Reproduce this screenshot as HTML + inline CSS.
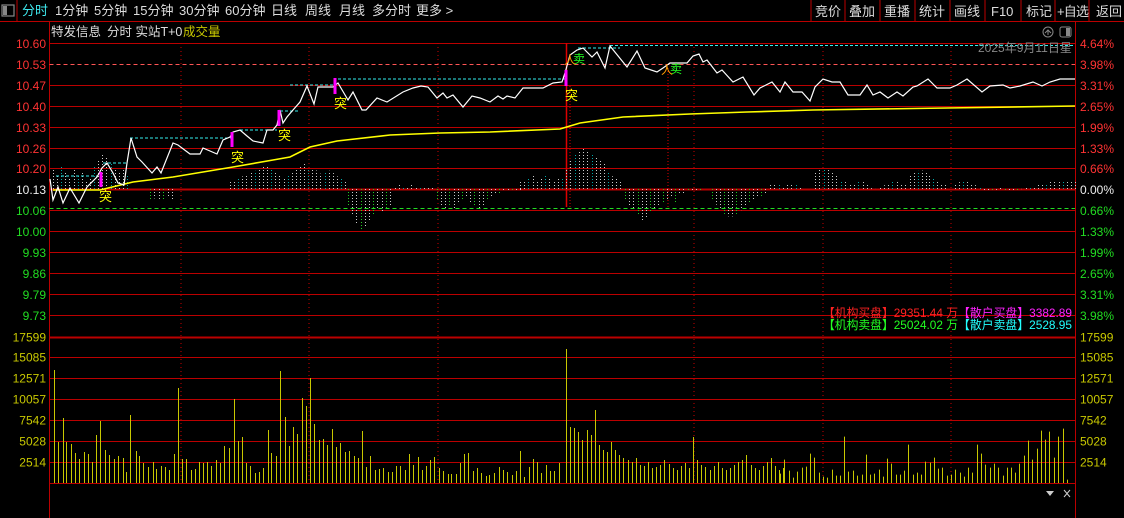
<!DOCTYPE html>
<html><head><meta charset="utf-8"><style>
html,body{margin:0;padding:0;background:#000;width:1124px;height:518px;overflow:hidden}
svg{display:block}
text{font-family:"Liberation Sans","Noto Sans CJK SC",sans-serif}
</style></head><body>
<svg id="s" width="1124" height="518" viewBox="0 0 1124 518" xmlns="http://www.w3.org/2000/svg">
<rect width="1124" height="518" fill="#000"/>
<rect x="2" y="5" width="12" height="11" fill="none" stroke="#888" stroke-width="1.2"/><rect x="3" y="6" width="4" height="9" fill="#888"/>
<line x1="17" y1="0" x2="17" y2="21" stroke="#b00" stroke-width="1"/>
<g font-size="13" fill="#ddd">
<text x="22" y="15" fill="#3ee8ee">分时</text>
<text x="55" y="15">1分钟</text><text x="94" y="15">5分钟</text><text x="133" y="15">15分钟</text>
<text x="179" y="15">30分钟</text><text x="225" y="15">60分钟</text><text x="271" y="15">日线</text>
<text x="305" y="15">周线</text><text x="339" y="15">月线</text><text x="372" y="15">多分时</text><text x="416" y="15">更多 &gt;</text>
<text x="815" y="16">竞价</text><text x="849" y="16">叠加</text><text x="884" y="16">重播</text><text x="919" y="16">统计</text>
<text x="954" y="16">画线</text><text x="991" y="16">F10</text><text x="1026" y="16">标记</text><text x="1057" y="16" letter-spacing="-0.8">+自选</text><text x="1096" y="16">返回</text>
</g>
<g stroke="#b00"><line x1="811" y1="0" x2="811" y2="21"/><line x1="845" y1="0" x2="845" y2="21"/><line x1="880" y1="0" x2="880" y2="21"/><line x1="915" y1="0" x2="915" y2="21"/><line x1="950" y1="0" x2="950" y2="21"/><line x1="985" y1="0" x2="985" y2="21"/><line x1="1021" y1="0" x2="1021" y2="21"/><line x1="1055" y1="0" x2="1055" y2="21"/><line x1="1089" y1="0" x2="1089" y2="21"/></g>
<line x1="0" y1="21.5" x2="1124" y2="21.5" stroke="#b00"/>
<g font-size="12.5"><text x="51" y="36" fill="#ddd">特发信息</text><text x="107" y="36" fill="#ddd">分时 实站T+0</text><text x="183" y="36" fill="#c8c800">成交量</text></g>
<circle cx="1048" cy="32" r="5" fill="none" stroke="#888"/><path d="M1045 33 L1048 30 L1051 33 M1048 30 V35" stroke="#888" fill="none"/>
<rect x="1060" y="27" width="11" height="10" rx="2" fill="none" stroke="#888"/><rect x="1066" y="28" width="4" height="8" fill="#888"/>
<line x1="49.5" y1="22" x2="49.5" y2="518" stroke="#b00"/>
<line x1="1075.5" y1="22" x2="1075.5" y2="518" stroke="#b00"/>
<g id="grid" stroke="#b00" stroke-width="1"></g>
<g id="vlines"></g>
<g id="bars"></g>
<g id="vol"></g>
<g id="lines"></g>
<g id="labels" font-size="12"></g>
<text x="978" y="52" font-size="12" fill="#888">2025年9月11日星</text>
<g font-size="12">
<text x="823" y="317" fill="#f22" textLength="135" lengthAdjust="spacingAndGlyphs">【机构买盘】29351.44 万</text><text x="958" y="317" fill="#f2f" textLength="114" lengthAdjust="spacingAndGlyphs">【散户买盘】3382.89</text>
<text x="823" y="329" fill="#2f2" textLength="135" lengthAdjust="spacingAndGlyphs">【机构卖盘】25024.02 万</text><text x="958" y="329" fill="#2ff" textLength="114" lengthAdjust="spacingAndGlyphs">【散户卖盘】2528.95</text>
</g>
<path d="M1046 491 L1054 491 L1050 496 Z" fill="#ccc"/>
<path d="M1064 490 L1070 497 M1070 490 L1064 497" stroke="#ccc"/>
</svg>
<script>
var NS="http://www.w3.org/2000/svg";
function el(p,t,a,txt){var e=document.createElementNS(NS,t);for(var k in a)e.setAttribute(k,a[k]);if(txt!=null)e.textContent=txt;document.getElementById(p).appendChild(e);return e;}
var L=49.5,R=1075;
var pl=["10.60","10.53","10.47","10.40","10.33","10.26","10.20","10.13","10.06","10.00","9.93","9.86","9.79","9.73"];
var pr=["4.64%","3.98%","3.31%","2.65%","1.99%","1.33%","0.66%","0.00%","0.66%","1.33%","1.99%","2.65%","3.31%","3.98%"];
for(var i=0;i<14;i++){var y=Math.round(43+20.9*i)+.5;
 if(i==1){el('grid','line',{x1:L,y1:y,x2:R,y2:y,stroke:'#f55','stroke-dasharray':'4 3'});}
 else if(i==8){el('grid','line',{x1:L,y1:y,x2:R,y2:y,stroke:'#b00'});el('grid','line',{x1:L,y1:y-2,x2:R,y2:y-2,stroke:'#2d2','stroke-dasharray':'4 3'});}
 else el('grid','line',{x1:L,y1:y,x2:R,y2:y,'stroke-width':i==7?2:1});
 var c=i<7?'#f33':(i==7?'#eee':'#2d2');
 el('labels','text',{x:46,y:y+4.5,'text-anchor':'end',fill:c,'font-size':12},pl[i]);
 el('labels','text',{x:1080,y:y+4.5,fill:c,'font-size':12},pr[i]);}
var vl=["17599","15085","12571","10057","7542","5028","2514"];
var vy=[337,357,378,399,420,441,462,483];
for(var i=0;i<8;i++){el('grid','line',{x1:L,y1:vy[i]+.5,x2:R,y2:vy[i]+.5,'stroke-width':i==0?2:1});
 if(i<7){el('labels','text',{x:46,y:vy[i]+4.5,'text-anchor':'end',fill:'#c8c800'},vl[i]);el('labels','text',{x:1080,y:vy[i]+4.5,fill:'#c8c800'},vl[i]);}}
[181,309,438,694,823,951].forEach(function(x){el('vlines','line',{x1:x,y1:43,x2:x,y2:483,stroke:'#c00','stroke-dasharray':'1 3'});});
el('vlines','line',{x1:566.5,y1:43,x2:566.5,y2:207,stroke:'#d00','stroke-width':1.5});
el('vlines','line',{x1:570,y1:86,x2:570,y2:207,stroke:'#d00','stroke-dasharray':'1 2'});
el('vlines','line',{x1:668,y1:68,x2:668,y2:207,stroke:'#d00','stroke-dasharray':'1 2'});
var segs=[[53,127,[170,175,165,172,178,168,176,172,180,178,165,160,155,158,163,170,172,168,175]],[150,172,[200,198,203,196,199]],
[230,300,[182,180,178,176,174,172,170,168,166,168,172,175,178,176,172,170,168]],[300,345,[165,162,170,168,172,175,170,172,176,178,180]],
[348,390,[205,215,225,230,228,222,215,210,212,208,205]],[395,432,[186,185,186,186,185,186,186,187,186,187]],[437,520,[200,205,210,205,208,203,200,198,202,205,208,206,200,198,195,193,192,190,191,192,190]],
[520,562,[180,182,178,176,180,178,176,178,180,178,179]],[566,600,[170,160,155,150,148,150,153,158,162]],[600,620,[160,165,175,178,180]],
[625,700,[200,205,210,215,220,218,212,208,205,203,200,198,202,195,193,192,190,192,191]],[712,765,[200,205,210,215,217,216,212,208,205,200,198,196,194]],
[770,800,[185,184,185,186,185,184,185,186]],[815,845,[172,170,168,170,172,175,180,182]],[850,905,[185,183,180,182,185,190,188,186,184,182,180,183,185]],[910,945,[175,172,170,172,175,180,183,185]],
[955,1000,[184,182,180,182,184,186,190,192,191,190,188]],[1005,1075,[191,190,191,190,189,188,187,186,185,184,183,182,181,180,182,181,180,181]]];
segs.forEach(function(sg){var a=sg[2],n=a.length,w=sg[1]-sg[0],cnt=Math.max(2,Math.round(w/4.1)+1);
 for(var k=0;k<cnt;k++){var t=k/(cnt-1)*(n-1),i0=Math.floor(t),i1=Math.min(n-1,i0+1),y=a[i0]+(a[i1]-a[i0])*(t-i0);
 var x=Math.round(sg[0]+w*k/(cnt-1))+.5;
 var c=y<189?((k%4==2)?'#0aa':'#ccc'):((k%3==0)?'#2c2':'#ccc');
 el('bars','line',{x1:x,y1:189,x2:x,y2:y,stroke:c,'stroke-dasharray':'1 2'});}});
var vz=[[150,120],[163,336],[175,264],[186,336],[198,342],[211,369],[222,387],[234,366],[245,372],[258,396],[270,315],[281,273],[295,360],[306,375],[318,387],[330,378],[343,384],[354,426],[365,255],[380,363],[390,378],[401,399],[413,411],[427,396],[438,417],[450,408],[461,411],[474,420],[486,372],[497,174],[510,387],[522,387],[534,420],[545,417],[558,396],[569,399],[580,396],[592,408],[606,390],[617,399],[628,348],[642,354],[654,207],[665,333],[677,321],[690,399],[701,408],[713,429],[724,426],[737,414],[749,300],[760,369],[774,378],[785,123],[797,261],[808,348],[821,291],[832,312],[845,204],[858,228],[869,144],[880,282],[892,330],[905,327],[916,345],[929,297],[940,351],[953,339],[965,366],[977,363],[990,378],[1001,384],[1013,303],[1024,411],[1037,378],[1049,420],[1061,417],[1072,414],[1085,426],[1097,426],[1108,408],[1121,408],[1133,420],[1144,372],[1156,405],[1169,381],[1181,420],[1192,408],[1204,390],[1216,381],[1228,414],[1240,423],[1253,432],[1264,432],[1276,432],[1288,399],[1300,372],[1311,369],[1323,423],[1336,414],[1348,429],[1360,438],[1370,435],[1384,429],[1396,411],[1407,420],[1419,426],[1433,435],[1445,423],[1455,363],[1468,441],[1480,411],[1491,387],[1503,396],[1516,429],[1528,405],[1540,423],[1552,423],[1564,399]];
function vb(x,y){el('vol','line',{x1:Math.round(x)+.5,y1:483,x2:Math.round(x)+.5,y2:y,stroke:'#c8c800'});}
vz.forEach(function(p){vb(p[0]/2.8,330+p[1]/3);});
var mid=[349,427,428,432,440,430,435,410,445,450,452,442,450,455,458,460,462,458,465,466,462,468,467,465,460,464,468,470,466,463,468,437,460,465,467,470,466,462,468,470,468,465,462,460,455,465,468,470,466,462,458,466,470,468];
for(var k=0;k<mid.length;k++)vb(566+k*4.1,mid[k]);
var rz=[[0,522],[13,480],[28,513],[40,534],[52,516],[65,504],[78,501],[91,462],[103,474],[117,519],[130,531],[142,534],[155,510],[168,528],[180,528],[193,411],[205,516],[220,513],[232,528],[245,525],[259,465],[271,525],[283,522],[296,510],[310,531],[322,477],[334,492],[347,525],[360,525],[373,513],[385,435],[399,525],[411,519],[423,525],[436,486],[450,489],[463,474],[475,507],[487,504],[502,528],[514,525],[526,510],[540,519],[553,531],[565,504],[577,519],[592,435],[604,462],[616,495],[630,504],[643,492],[655,504],[668,528],[681,504],[693,504],[705,519],[718,492],[732,468],[745,423],[757,480],[772,447],[784,393],[796,420],[808,396],[822,474],[835,411],[848,387],[860,540]];
rz.forEach(function(p){vb(780+p[0]/3,483-(550-p[1])/3);});
[[56,97,176],[103,127,163],[130,232,138],[240,277,130],[280,300,111],[290,333,85],[338,565,79],[578,620,48],[610,1075,45.5]].forEach(function(c){el('lines','line',{x1:c[0],y1:c[2],x2:c[1],y2:c[2],stroke:'#3ee','stroke-dasharray':'3 2'});});
el('lines','polyline',{points:"53,190 100,190 133,182 173,177 233,167 273,160 290,157 310,147 337,141 390,135 440,133 490,132 560,129 580,123 623,117 690,114 747,112 813,110 947,108 1075,106",fill:'none',stroke:'#ff0','stroke-width':1.6});
el('lines','polyline',{points:"50,179 53,200 58,187 63,203 70,188 79,203 87,187 97,177 102,168 107,163 113,173 118,183 124,185 127,163 131,138 137,157 142,162 152,173 157,167 161,173 173,143 178,145 190,154 200,154 203,148 217,154 223,140 230,137 233,132 240,130 247,136 253,141 263,143 267,130 273,130 277,125 280,110 283,123 287,117 293,110 300,102 307,86 314,104 318,87 333,87 338,83 348,100 353,92 362,110 366,110 377,98 387,102 403,92 413,88 421,86 428,87 437,98 443,93 447,98 453,95 463,107 472,96 480,98 490,102 498,96 503,99 507,96 515,98 523,88 543,88 553,83 562,82 565,73 570,55 577,50 583,48 592,57 597,52 605,68 610,46 627,67 637,51 645,68 657,72 663,68 670,63 680,63 687,63 693,56 699,54 703,62 707,60 717,73 722,70 733,82 743,77 754,95 760,88 772,82 780,92 785,82 793,92 802,92 810,101 815,87 823,79 832,82 840,82 848,95 860,95 867,85 873,95 880,92 888,98 897,92 903,96 913,87 917,86 928,79 937,88 950,88 957,85 967,79 982,92 990,86 1003,85 1010,88 1020,86 1033,82 1042,86 1050,82 1060,79 1075,79",fill:'none',stroke:'#fff','stroke-width':1.2});
[[101,172,187],[232,132,147],[279,110,126],[335,78,94],[566,70,86]].forEach(function(m){el('lines','rect',{x:m[0]-1.5,y:m[1],width:3,height:m[2]-m[1],fill:'#f0f'});});
[[99,201],[231,162],[278,140],[334,108],[565,100]].forEach(function(t){el('lines','text',{x:t[0],y:t[1],fill:'#ff0','font-size':13},'突');});
[[573,63],[670,73]].forEach(function(t){el('lines','text',{x:t[0],y:t[1],fill:'#2f2','font-size':12},'卖');el('lines','text',{x:t[0]-9,y:t[1]+1,fill:'#f90','font-size':12},'人');});
</script>
</body></html>
